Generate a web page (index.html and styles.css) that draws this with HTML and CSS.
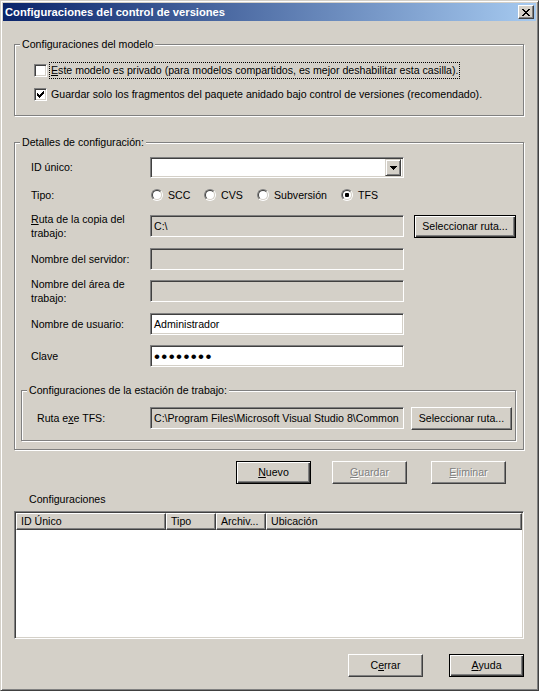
FILE: index.html
```html
<!DOCTYPE html>
<html lang="es">
<head>
<meta charset="utf-8">
<title>Configuraciones del control de versiones</title>
<link rel="stylesheet" href="styles.css">
</head>
<body>
<div class="window">
  <div class="titlebar">
    <span class="title">Configuraciones del control de versiones</span>
    <span class="close"><svg width="8" height="7" viewBox="0 0 8 7" shape-rendering="crispEdges"><path fill="#000" d="M0 0h2v1H0z M6 0h2v1H6z M1 1h2v1H1z M5 1h2v1H5z M2 2h4v1H2z M3 3h2v1H3z M2 4h4v1H2z M1 5h2v1H1z M5 5h2v1H5z M0 6h2v1H0z M6 6h2v1H6z"/></svg></span>
  </div>
  <div class="content">
    <fieldset class="group g-model">
      <legend>Configuraciones del modelo</legend>
      <div class="check-row first">
        <span class="checkbox"></span>
        <span class="check-text focus"><u>E</u>ste modelo es privado (para modelos compartidos, es mejor deshabilitar esta casilla).</span>
      </div>
      <div class="check-row second">
        <span class="checkbox"><svg width="7" height="7" viewBox="0 0 7 7" shape-rendering="crispEdges"><path fill="#000" d="M6 0h1v1H6z M5 1h2v1H5z M0 2h1v1H0z M4 2h3v1H4z M0 3h2v1H0z M3 3h3v1H3z M0 4h5v1H0z M1 5h3v1H1z M2 6h1v1H2z"/></svg></span>
        <span class="check-text">Guardar solo los fragmentos del paquete anidado bajo control de versiones (recomendado).</span>
      </div>
    </fieldset>

    <fieldset class="group g-details">
      <legend>Detalles de configuración:</legend>
      <div class="form">
        <div class="frow r1">
          <span class="lbl">ID único:</span>
          <div class="combo">
            <span class="combo-btn"><svg width="7" height="4" viewBox="0 0 7 4" shape-rendering="crispEdges"><path fill="#000" d="M0 0h7v1H0z M1 1h5v1H1z M2 2h3v1H2z M3 3h1v1H3z"/></svg></span>
          </div>
        </div>
        <div class="frow r2">
          <span class="lbl">Tipo:</span>
          <div class="radios">
            <span class="ri"><span class="radio"><span class="radio-in"></span></span>SCC</span>
            <span class="ri"><span class="radio"><span class="radio-in"></span></span>CVS</span>
            <span class="ri wide"><span class="radio"><span class="radio-in"></span></span>Subversión</span>
            <span class="ri"><span class="radio"><span class="radio-in"><span class="dot"></span></span></span>TFS</span>
          </div>
        </div>
        <div class="frow r3">
          <span class="lbl two"><u>R</u>uta de la copia del<br>trabajo:</span>
          <div class="field disabled">C:\</div>
          <span class="btn default">Seleccionar ruta...</span>
        </div>
        <div class="frow r4">
          <span class="lbl">Nombre del servidor:</span>
          <div class="field disabled"></div>
        </div>
        <div class="frow r5">
          <span class="lbl two">Nombre del área de<br>trabajo:</span>
          <div class="field disabled"></div>
        </div>
        <div class="frow r6">
          <span class="lbl">Nombre de usuario:</span>
          <div class="field">Administrador</div>
        </div>
        <div class="frow r7">
          <span class="lbl">Clave</span>
          <div class="field"><span class="pwd">••••••••</span></div>
        </div>
      </div>

      <fieldset class="group g-station">
        <legend>Configuraciones de la estación de trabajo:</legend>
        <div class="srow">
          <span class="slbl">Ruta e<u>x</u>e TFS:</span>
          <div class="field disabled">C:\Program Files\Microsoft Visual Studio 8\Common</div>
          <span class="btn sbtn">Seleccionar ruta...</span>
        </div>
      </fieldset>
    </fieldset>

    <div class="actions">
      <span class="btn default b-nuevo"><u>N</u>uevo</span>
      <span class="btn disabled-btn b-guardar"><u>G</u>uardar</span>
      <span class="btn disabled-btn b-eliminar"><u>E</u>liminar</span>
    </div>

    <div class="list-label">Configuraciones</div>
    <div class="listview">
      <div class="lv-header">
        <span class="hcell c1">ID Único</span>
        <span class="hcell c2">Tipo</span>
        <span class="hcell c3">Archiv...</span>
        <span class="hcell c4">Ubicación</span>
      </div>
      <div class="lv-body"></div>
    </div>

    <div class="footer">
      <span class="btn">C<u>e</u>rrar</span>
      <span class="btn default"><u>A</u>yuda</span>
    </div>
  </div>
</div>
</body>
</html>
```

FILE: styles.css
```css
* { box-sizing: border-box; }
html, body { margin: 0; padding: 0; }
body {
  width: 539px;
  height: 691px;
  overflow: hidden;
  font-family: "Liberation Sans", Arial, sans-serif;
  font-size: 10.6px;
  line-height: 13px;
  color: #000;
  background: #D4D0C8;
}
u { text-decoration: underline; text-underline-offset: 1px; }

.window {
  width: 539px;
  height: 691px;
  background: #D4D0C8;
  border: 1px solid;
  border-color: #D4D0C8 #404040 #404040 #D4D0C8;
  box-shadow: inset 1px 1px 0 #fff, inset -1px -1px 0 #808080;
  padding: 2px;
  display: flex;
  flex-direction: column;
}

.titlebar {
  height: 18px;
  flex-shrink: 0;
  background: linear-gradient(to right, #0A246A, #A6CAF0);
  display: flex;
  align-items: center;
  justify-content: space-between;
  padding: 0 2px;
}
.title {
  color: #fff;
  font-weight: bold;
  font-size: 11.2px;
}
.close {
  width: 16px;
  height: 14px;
  background: #D4D0C8;
  border: 1px solid;
  border-color: #fff #404040 #404040 #fff;
  box-shadow: inset -1px -1px 0 #808080;
  display: flex;
  align-items: center;
  justify-content: center;
  padding-right: 1px;
}
.close svg { display: block; }

.content {
  padding: 0 12px 0 11px;
  display: flex;
  flex-direction: column;
}

/* Etched group boxes */
.group {
  margin: 0;
  padding: 0;
  min-inline-size: 0;
  border: 1px solid #808080;
  box-shadow: inset 1px 1px 0 #fff, 1px 1px 0 #fff;
}
.group > legend {
  margin-left: 5px;
  padding: 0 2px;
  line-height: 13px;
  background: #D4D0C8;
}

.g-model {
  margin-top: 17px;
  padding-bottom: 12px;
}
.check-row {
  display: flex;
  align-items: center;
  height: 17px;
  margin-left: 19px;
}
.check-row.first { margin-top: 11px; }
.check-row.second { margin-top: 7px; }
.checkbox {
  width: 13px;
  height: 13px;
  flex-shrink: 0;
  background: #fff;
  border: 1px solid;
  border-color: #808080 #fff #fff #808080;
  box-shadow: inset 1px 1px 0 #404040, inset -1px -1px 0 #D4D0C8;
  display: flex;
  align-items: center;
  justify-content: center;
}
.checkbox svg { display: block; }
.check-text {
  margin-left: 3px;
  padding: 1px 1px;
  white-space: nowrap;
}
.check-row.second .check-text { margin-left: 4px; padding: 1px 0; }
.check-text.focus { outline: 1px dotted #000; }

.g-details {
  margin-top: 20px;
  padding-bottom: 8px;
}
.form { padding-left: 16px; }
.frow {
  display: flex;
  align-items: center;
  height: 22px;
}
.frow.r1 { margin-top: 8px; height: 21px; }
.frow.r2 { margin-top: 10px; height: 14px; }
.frow.r3 { margin-top: 13px; }
.frow.r4 { margin-top: 11px; }
.frow.r5 { margin-top: 10px; }
.frow.r6 { margin-top: 11px; }
.frow.r7 { margin-top: 10px; }
.lbl {
  width: 119px;
  flex-shrink: 0;
  white-space: nowrap;
}
.lbl.two { line-height: 14px; }

.field {
  width: 254px;
  height: 22px;
  flex-shrink: 0;
  background: #fff;
  border: 1px solid;
  border-color: #808080 #fff #fff #808080;
  box-shadow: inset 1px 1px 0 #404040, inset -1px -1px 0 #D4D0C8;
  padding: 0 3px;
  display: flex;
  align-items: center;
  white-space: nowrap;
  overflow: hidden;
}
.field.disabled { background: #D4D0C8; }
.pwd {
  font-size: 17px;
  letter-spacing: 1.4px;
  line-height: 13px;
  padding-top: 1px;
}

.combo {
  width: 254px;
  height: 21px;
  background: #fff;
  border: 1px solid;
  border-color: #808080 #fff #fff #808080;
  box-shadow: inset 1px 1px 0 #404040, inset -1px -1px 0 #D4D0C8;
  display: flex;
  justify-content: flex-end;
  align-items: center;
  padding: 1px 2px 1px 0;
}
.combo-btn {
  width: 16px;
  height: 17px;
  background: #D4D0C8;
  border: 1px solid;
  border-color: #D4D0C8 #404040 #404040 #D4D0C8;
  box-shadow: inset 1px 1px 0 #fff, inset -1px -1px 0 #808080;
  display: flex;
  align-items: center;
  justify-content: center;
}
.combo-btn svg { display: block; }

.radios {
  display: flex;
  align-items: center;
  margin-left: 1px;
}
.ri {
  display: flex;
  align-items: center;
  width: 53px;
  gap: 5px;
  white-space: nowrap;
}
.ri.wide { width: 84px; }
.radio {
  width: 12px;
  height: 12px;
  flex-shrink: 0;
  border-radius: 50%;
  border: 1px solid;
  border-color: #808080 #fff #fff #808080;
  display: flex;
}
.radio-in {
  width: 10px;
  height: 10px;
  border-radius: 50%;
  border: 1px solid;
  border-color: #404040 #D4D0C8 #D4D0C8 #404040;
  background: #fff;
  display: flex;
  align-items: center;
  justify-content: center;
}
.dot {
  width: 4px;
  height: 4px;
  border-radius: 1px;
  background: #000;
}

.btn {
  width: 75px;
  height: 23px;
  flex-shrink: 0;
  background: #D4D0C8;
  border: 1px solid;
  border-color: #fff #404040 #404040 #fff;
  box-shadow: inset -1px -1px 0 #808080;
  display: flex;
  align-items: center;
  justify-content: center;
  white-space: nowrap;
}
.btn.default {
  border: 1px solid #000;
  box-shadow: inset 1px 1px 0 #fff, inset -1px -1px 0 #404040, inset -2px -2px 0 #808080;
}
.frow .btn { width: 102px; margin-left: 10px; }
.btn.disabled-btn {
  color: #808080;
  text-shadow: 1px 1px 0 #fff;
}

.g-station {
  margin: 17px 7px 0 6px;
  padding-bottom: 11px;
}
.srow {
  display: flex;
  align-items: center;
  height: 22px;
  margin-top: 10px;
  padding-left: 15px;
}
.slbl { width: 113px; flex-shrink: 0; white-space: nowrap; }
.sbtn { width: 101px; margin-left: 7px; }

.actions {
  display: flex;
  margin-top: 11px;
  padding-left: 222px;
}
.b-guardar { margin-left: 21px; }
.b-eliminar { margin-left: 24px; }

.list-label {
  margin-top: 9px;
  padding-left: 15px;
}
.listview {
  margin-top: 5px;
  height: 128px;
  background: #fff;
  border: 1px solid;
  border-color: #808080 #fff #fff #808080;
  box-shadow: inset 1px 1px 0 #404040, inset -1px -1px 0 #D4D0C8;
  padding: 1px;
  display: flex;
  flex-direction: column;
}
.lv-header {
  display: flex;
  height: 17px;
  flex-shrink: 0;
}
.hcell {
  height: 17px;
  background: #D4D0C8;
  border: 1px solid;
  border-color: #fff #404040 #404040 #fff;
  box-shadow: inset -1px -1px 0 #808080;
  padding-left: 4px;
  display: flex;
  align-items: center;
  white-space: nowrap;
  overflow: hidden;
}
.hcell.c1 { width: 150px; }
.hcell.c2 { width: 50px; }
.hcell.c3 { width: 50px; }
.hcell.c4 { flex: 1; }
.lv-body { flex: 1; background: #fff; }

.footer {
  margin-top: 15px;
  display: flex;
  justify-content: flex-end;
  gap: 26px;
}
```
